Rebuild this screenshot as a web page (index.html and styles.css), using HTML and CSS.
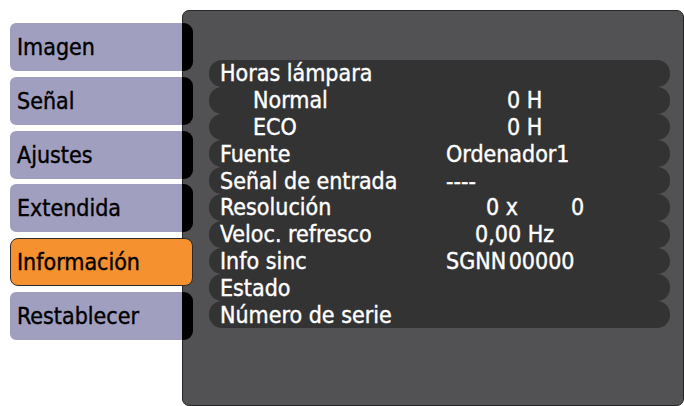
FILE: index.html
```html
<!DOCTYPE html>
<html>
<head>
  <meta charset="UTF-8">
  <title>Información</title>
  <link rel="stylesheet" href="styles.css">
</head>
<body>
  <div class="screen">
    <!-- menu tabs -->
    <nav class="tabs">
      <div class="tab">Imagen</div>
      <div class="tab">Señal</div>
      <div class="tab">Ajustes</div>
      <div class="tab">Extendida</div>
      <div class="tab active">Información</div>
      <div class="tab">Restablecer</div>
    </nav>

    <!-- info panel -->
    <section class="panel">
      <div class="rows">
        <div class="row"><span class="label">Horas lámpara</span><span></span></div>
        <div class="row"><span class="label indent">Normal</span><span class="v-hours">0 H</span></div>
        <div class="row"><span class="label indent">ECO</span><span class="v-hours">0 H</span></div>
        <div class="row"><span class="label">Fuente</span><span>Ordenador1</span></div>
        <div class="row"><span class="label">Señal de entrada</span><span>----</span></div>
        <div class="row"><span class="label">Resolución</span><span class="v-res">0 x<span class="res-h">0</span></span></div>
        <div class="row"><span class="label">Veloc. refresco</span><span class="v-rate">0,00 Hz</span></div>
        <div class="row"><span class="label">Info sinc</span><span class="v-sync">SGNN 00000</span></div>
        <div class="row"><span class="label">Estado</span><span></span></div>
        <div class="row"><span class="label">Número de serie</span><span></span></div>
      </div>
    </section>
  </div>
</body>
</html>
```

FILE: styles.css
```css
body {
  margin: 0;
  background: #fff;
  font-family: "DejaVu Sans Condensed", "DejaVu Sans", sans-serif;
  font-size: 23px;
  -webkit-text-stroke: 0.4px currentColor;
}
.screen {
  display: flex;
  height: 406px;
  overflow: hidden;
}
.tabs {
  flex: none;
  width: 182px;
  box-sizing: border-box;
  padding: 23px 0 0 10px;
  display: flex;
  flex-direction: column;
  gap: 5.8px;
}
.tab {
  position: relative;
  z-index: 1;
  height: 48px;
  margin-right: -11px;
  box-sizing: border-box;
  padding-left: 7px;
  display: flex;
  align-items: center;
  color: #000;
  background: linear-gradient(to right, #a09fc0 172px, #000 172px);
  border-radius: 6px 9px 9px 6px;
}
.tab.active {
  background: #f5922f;
  border: 1px solid #2b2b2b;
  border-radius: 8px;
  padding-left: 6px;
}
.panel {
  flex: 1;
  margin-top: 10px;
  height: 396px;
  box-sizing: border-box;
  background: #525254;
  border: 1px solid #262626;
  border-radius: 7px;
  padding: 49px 13px 0 26px;
}
.row {
  display: grid;
  grid-template-columns: 237px 1fr;
  align-items: center;
  height: 26.8px;
  background: #333;
  border-radius: 13px;
  color: #fff;
  white-space: nowrap;
}
.label {
  padding-left: 11px;
}
.label.indent {
  padding-left: 44px;
}
.v-hours {
  padding-left: 61px;
}
.v-res {
  padding-left: 40px;
}
.res-h {
  margin-left: 53px;
}
.v-rate {
  padding-left: 29px;
}
.v-sync {
  word-spacing: -4px;
}
```
